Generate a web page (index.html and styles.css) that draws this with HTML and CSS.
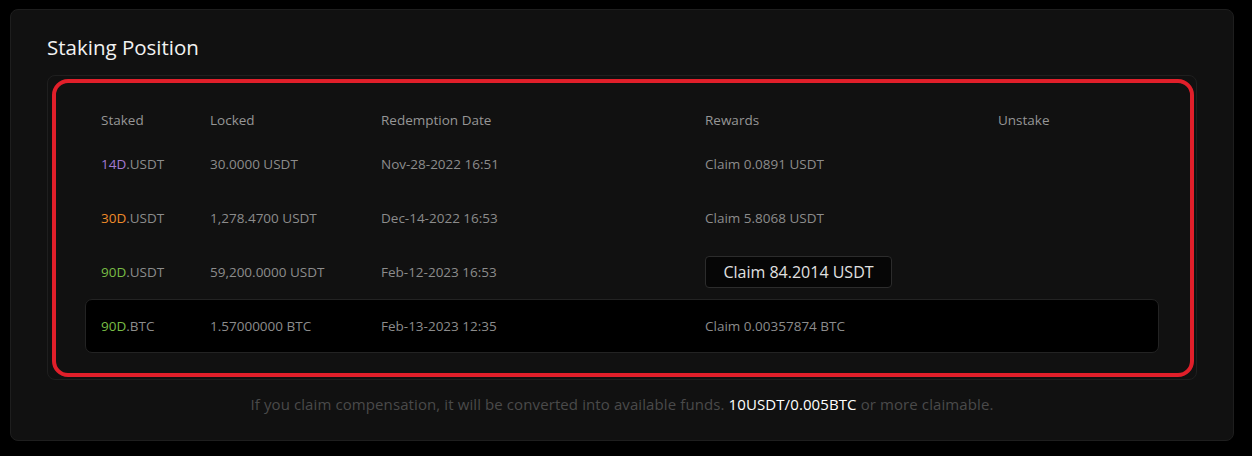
FILE: index.html
```html
<!DOCTYPE html>
<html>
<head>
<meta charset="utf-8">
<link rel="stylesheet" href="styles.css">
</head>
<body>
<section class="card">
  <h2 class="title">Staking Position</h2>
  <div class="inner">
    <div class="frame">
      <div class="row head">
        <div>Staked</div>
        <div>Locked</div>
        <div>Redemption Date</div>
        <div>Rewards</div>
        <div>Unstake</div>
      </div>
      <div class="row">
        <div><span class="d14">14D</span>.USDT</div>
        <div>30.0000 USDT</div>
        <div>Nov-28-2022 16:51</div>
        <div>Claim 0.0891 USDT</div>
        <div></div>
      </div>
      <div class="row">
        <div><span class="d30">30D</span>.USDT</div>
        <div>1,278.4700 USDT</div>
        <div>Dec-14-2022 16:53</div>
        <div>Claim 5.8068 USDT</div>
        <div></div>
      </div>
      <div class="row">
        <div><span class="d90">90D</span>.USDT</div>
        <div>59,200.0000 USDT</div>
        <div>Feb-12-2023 16:53</div>
        <div><button class="claim">Claim 84.2014 USDT</button></div>
        <div></div>
      </div>
      <div class="row active">
        <div><span class="d90">90D</span>.BTC</div>
        <div>1.57000000 BTC</div>
        <div>Feb-13-2023 12:35</div>
        <div>Claim 0.00357874 BTC</div>
        <div></div>
      </div>
    </div>
  </div>
  <p class="note">If you claim compensation, it will be converted into available funds. <strong>10USDT/0.005BTC</strong> or more claimable.</p>
</section>
</body>
</html>
```
FILE: styles.css
```css
* { box-sizing: border-box; }
html, body { margin: 0; background: #000; }
body {
  padding: 9px 18px 15px 10px;
  font-family: "Open Sans", "Noto Sans", sans-serif;
}
.card {
  width: 1224px;
  height: 432px;
  background: #111;
  border: 1px solid #1e1e1e;
  border-radius: 8px;
  padding: 23px 36px 0 36px;
}
.title {
  margin: 0;
  font-weight: 400;
  font-size: 20.5px;
  line-height: 28px;
  color: #f2f2f2;
}
.inner {
  margin-top: 14px;
  border: 1px solid #1f1f1f;
  border-radius: 8px;
  padding: 3px 2px 2px 4px;
}
.frame {
  border: 4px solid #e11f2a;
  border-radius: 16px;
  padding: 21px 31px 20px 29px;
}
.row {
  display: grid;
  grid-template-columns: 109px 171px 324px 293px 1fr;
  align-items: center;
  height: 54px;
  padding-left: 15px;
  font-size: 13.5px;
  color: #8c8c8c;
  border: 1px solid transparent;
  border-radius: 7px;
}
.row.head {
  height: 33px;
  padding-bottom: 2px;
  color: #969696;
}
.row.active {
  background: #000;
  border-color: #232323;
}
.d14 { color: #a27ad3; }
.d30 { color: #ee8b2a; }
.d90 { color: #78bc45; }
.claim {
  font-family: inherit;
  font-size: 16px;
  color: #e0e0e0;
  background: #060606;
  border: 1px solid #2c2c2c;
  border-radius: 4px;
  height: 32px;
  width: 187px;
  padding: 0;
  cursor: pointer;
}
.note {
  margin: 14px 0 0;
  text-align: center;
  font-size: 15px;
  color: #4a4a4a;
  letter-spacing: 0.1px;
}
.note strong {
  font-weight: 400;
  color: #fff;
}
```
